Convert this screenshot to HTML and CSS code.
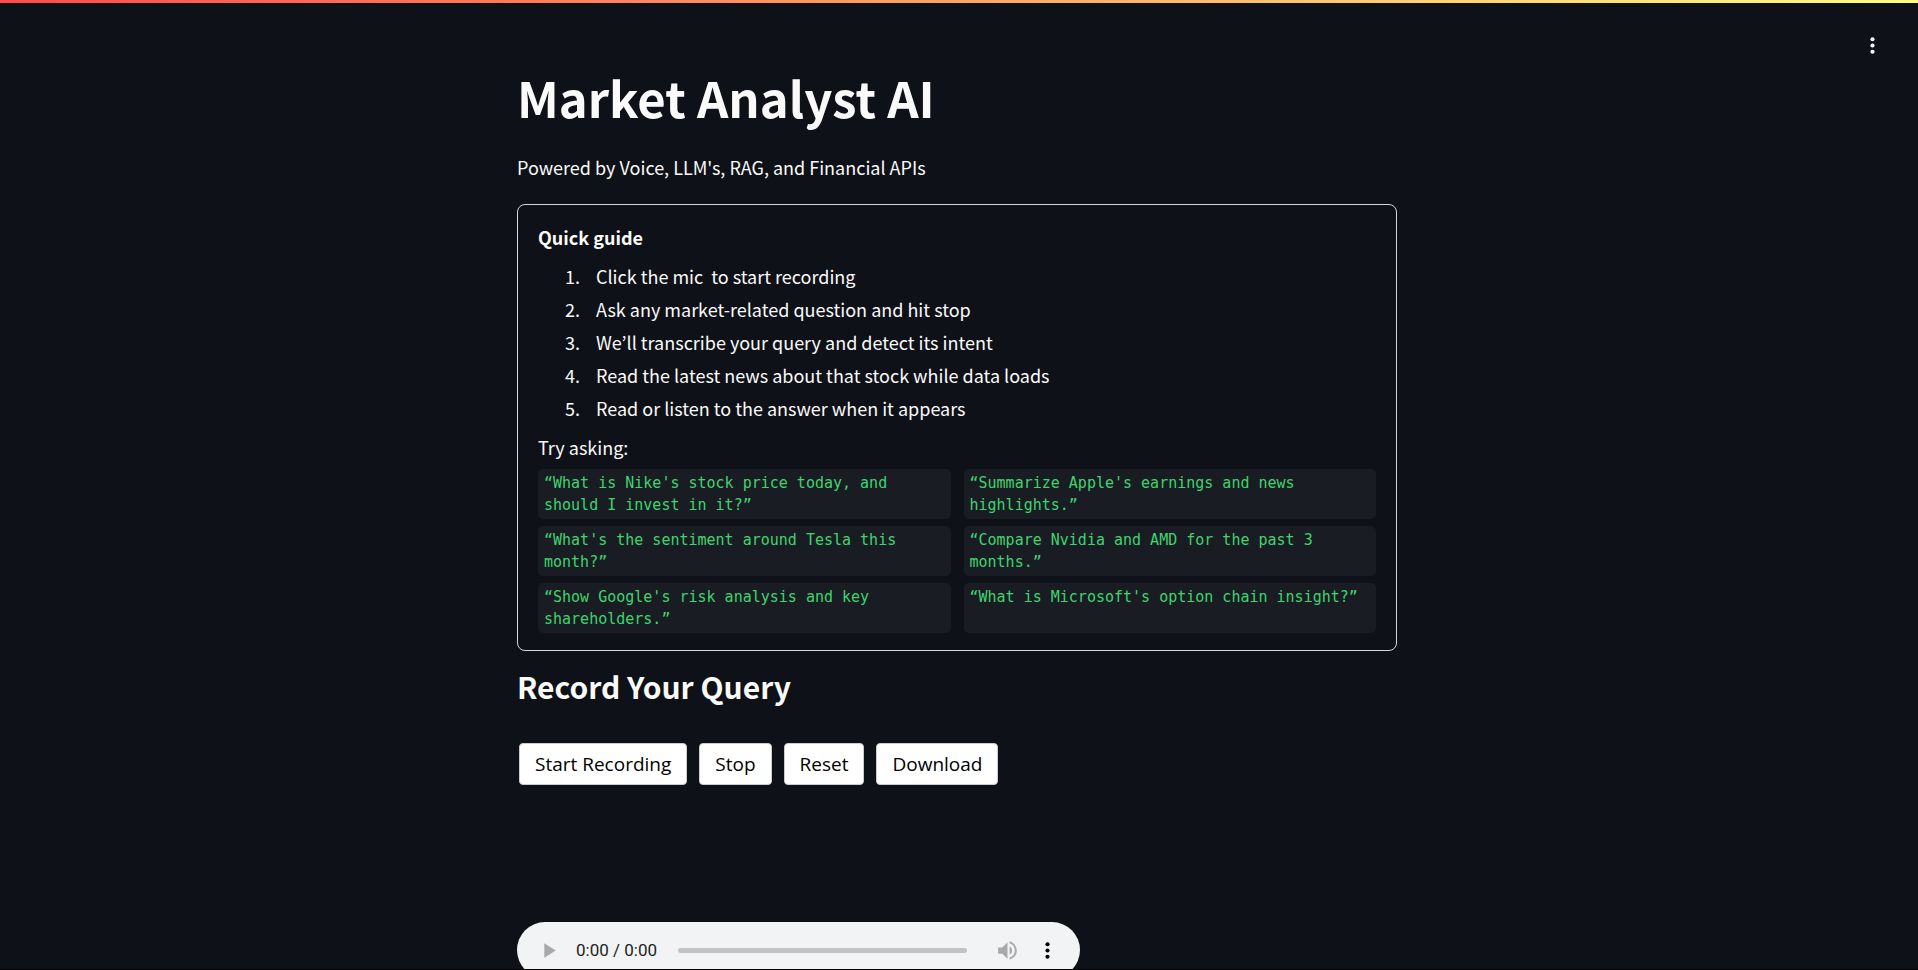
FILE: index.html
```html
<!DOCTYPE html>
<html lang="en">
<head>
<meta charset="utf-8">
<title>Market Analyst AI</title>
<meta name="viewport" content="width=device-width, initial-scale=1">
<link rel="stylesheet" href="styles.css">
</head>
<body>
<div class="app">
  <div class="decoration"></div>
  <header class="toolbar">
    <button class="icon-button menu-button" type="button" aria-label="Main menu">
      <svg viewBox="0 0 24 24" width="25" height="25" fill="currentColor"><circle cx="12" cy="6" r="2"/><circle cx="12" cy="12" r="2"/><circle cx="12" cy="18" r="2"/></svg>
    </button>
  </header>
  <main class="content">
    <h1 class="title">Market Analyst AI</h1>
    <p class="subtitle">Powered by Voice, LLM's, RAG, and Financial APIs</p>
    <section class="guide">
      <p class="guide-title">Quick guide</p>
      <ol class="steps">
        <li>Click the mic&nbsp; to start recording</li>
        <li>Ask any market-related question and hit stop</li>
        <li>We’ll transcribe your query and detect its intent</li>
        <li>Read the latest news about that stock while data loads</li>
        <li>Read or listen to the answer when it appears</li>
      </ol>
      <p class="try">Try asking:</p>
      <div class="examples">
        <code>“What is Nike's stock price today, and should I invest in it?”</code>
        <code>“Summarize Apple's earnings and news highlights.”</code>
        <code>“What's the sentiment around Tesla this month?”</code>
        <code>“Compare Nvidia and AMD for the past 3 months.”</code>
        <code>“Show Google's risk analysis and key shareholders.”</code>
        <code>“What is Microsoft's option chain insight?”</code>
      </div>
    </section>
    <h3 class="heading">Record Your Query</h3>
    <div class="actions">
      <button class="action" type="button">Start Recording</button>
      <button class="action" type="button">Stop</button>
      <button class="action" type="button">Reset</button>
      <button class="action" type="button">Download</button>
    </div>
    <div class="player">
      <button class="icon-button muted" type="button" aria-label="Play">
        <svg viewBox="0 0 24 24" width="25" height="25" fill="currentColor"><path d="M7 5v14l11-7z"/></svg>
      </button>
      <span class="time">0:00 / 0:00</span>
      <input class="seek" type="range" min="0" max="100" value="0" aria-label="Seek" disabled>
      <button class="icon-button muted volume" type="button" aria-label="Mute">
        <svg viewBox="0 0 24 24" width="25" height="25" fill="currentColor"><path d="M3 9v6h4l5 5V4L7 9H3zm13.500 3A4.500 4.500 0 0 0 14 7.970v8.050A4.500 4.500 0 0 0 16.500 12zM14 3.230v2.060a7 7 0 0 1 0 13.420v2.060a9 9 0 0 0 0-17.540z"/></svg>
      </button>
      <button class="icon-button" type="button" aria-label="More options">
        <svg viewBox="0 0 24 24" width="25" height="25" fill="currentColor"><circle cx="12" cy="6" r="2"/><circle cx="12" cy="12" r="2"/><circle cx="12" cy="18" r="2"/></svg>
      </button>
    </div>
  </main>
</div>
</body>
</html>
```
FILE: styles.css
```css
* { box-sizing: border-box; }
body {
  margin: 0;
  background: #0e1117;
  color: #fafafa;
  font: 18px/32px "Noto Sans CJK KR", "Noto Sans", sans-serif;
}
h1, h3, p, ol { margin: 0; }
.app {
  position: relative;
  height: 100vh;
  overflow: hidden;
  border-bottom: 1px solid #000;
}
.decoration {
  height: 3px;
  background: linear-gradient(90deg, #ff4b4b, #fffd80);
}
.toolbar {
  position: absolute;
  top: 33px;
  right: 33px;
}
.icon-button {
  display: flex;
  padding: 0;
  border: 0;
  background: none;
  color: inherit;
}
.content {
  width: 100%;
  max-width: 884px;
  margin: 0 auto;
  padding: 61px 4px 0 0;
}
.title {
  font-size: 49px;
  line-height: 66px;
  font-weight: 700;
}
.subtitle { margin-top: 21px; }
.guide {
  margin-top: 21px;
  padding: 16px 20px 17px;
  border: 1px solid #d5d6d8;
  border-radius: 8px;
}
.guide-title { font-weight: 700; }
.steps {
  display: grid;
  gap: 1px;
  margin-top: 7px;
  padding-left: 46px;
}
.steps li { padding-left: 12px; }
.try { margin-top: 7px; }
.examples {
  display: grid;
  grid-template-columns: 1fr 1fr;
  gap: 7px 13px;
  margin-top: 6px;
}
.examples code {
  padding: 3px 6px;
  border-radius: 5px;
  background: #1a1c24;
  color: #3dd56d;
  font: 15px/22px "DejaVu Sans Mono", "Liberation Mono", monospace;
}
.heading {
  margin-top: 14px;
  font-size: 30px;
  line-height: 42px;
}
.actions {
  display: flex;
  gap: 12px;
  margin: 36px 2px 0;
}
.action {
  padding: 5px 15px;
  border: 1px solid #ccc;
  border-radius: 4px;
  background: #fff;
  color: #000;
  font: 19px/30px "Open Sans", sans-serif;
}
.player {
  display: flex;
  align-items: center;
  width: 64%;
  height: 56px;
  margin-top: 137px;
  padding: 0 20px;
  border-radius: 34px;
  background: #f1f3f4;
  color: #000;
}
.muted { color: #a8a9aa; }
.time {
  margin: 0 21px 0 14px;
  color: #222;
  font: 17px/24px Roboto, sans-serif;
}
.seek {
  appearance: none;
  flex: 1;
  min-width: 0;
  height: 5px;
  margin: 0 28px 0 0;
  border-radius: 3px;
  background: #c1c2c3;
}
.seek::-webkit-slider-thumb {
  appearance: none;
  width: 0;
  height: 0;
}
.volume { margin-right: 15px; }
```
